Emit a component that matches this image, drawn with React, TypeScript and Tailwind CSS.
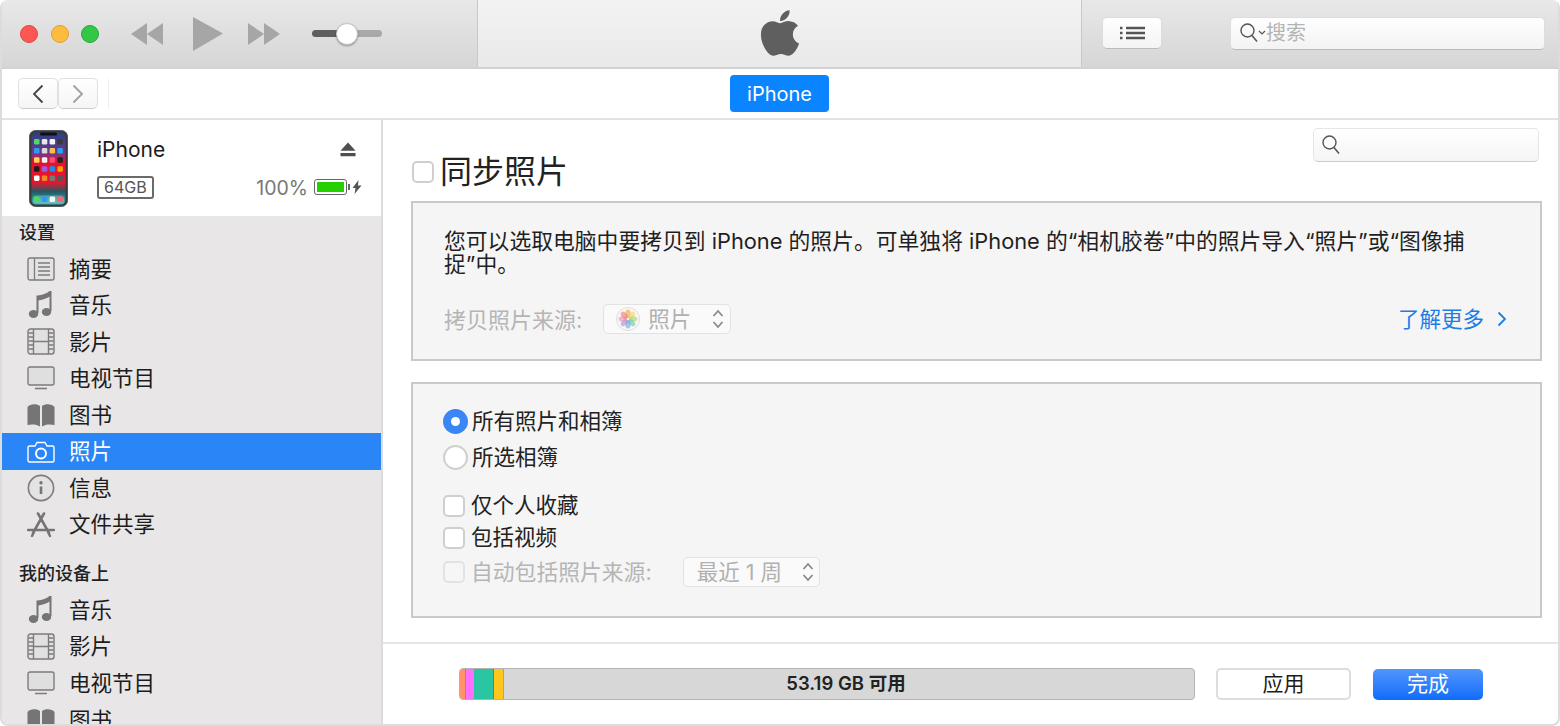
import { FaApple } from "react-icons/fa";

const FONT = "font-['Inter','Noto_Sans_CJK_SC',sans-serif]";

const PHONE_ICONS = [
  ["#4cd964", "#e8e8e8", "#f5f5f5", "#3a3a3a"],
  ["#2e9bf0", "#d9d9d9", "#f2c14e", "#2aa3ef"],
  ["#ffd65a", "#f2f2f2", "#ff4f6d", "#222222"],
  ["#1c1c1c", "#a259e6", "#1d8cf0", "#ff9f0a"],
  ["#ffffff", "#f08a24", "#777777", "#555555"],
];

function IconSummary() {
  return (
    <svg viewBox="0 0 28 24" className="w-7 h-6">
      <rect x="1" y="1" width="26" height="22" rx="2" fill="#e4e3e3" stroke="#7c7c7c" strokeWidth="1.4" />
      <path d="M7.5 1v22M11 6h12M11 10h12M11 14h12M11 18h12" stroke="#7c7c7c" strokeWidth="1.3" fill="none" />
    </svg>
  );
}

function IconMusic() {
  return (
    <svg viewBox="0 0 28 28" className="w-7 h-7">
      <path d="M10.500 22V5.500C15 5 20 3.500 23.500 0.500V20" stroke="#757575" strokeWidth="2" fill="none" />
      <path d="M10.500 5.500C15 5 20 3.500 23.500 0.500V5C20 7.500 15 9 10.500 9.500z" fill="#757575" />
      <ellipse cx="6.500" cy="23" rx="4.700" ry="4" fill="#757575" />
      <ellipse cx="19.500" cy="21" rx="4.700" ry="4" fill="#757575" />
    </svg>
  );
}

function IconFilm() {
  return (
    <svg viewBox="0 0 28 27" className="w-7 h-[27px]">
      <rect x="1" y="1" width="26" height="25" rx="2.5" fill="#e2e1e1" stroke="#7c7c7c" strokeWidth="1.4" />
      <path d="M6.5 1v25M21.5 1v25M6.5 13.5h15" stroke="#7c7c7c" strokeWidth="1.4" fill="none" />
      <path d="M1.5 5h5M1.5 9h5M1.5 13h5M1.5 17h5M1.5 21h5M21.5 5h5M21.5 9h5M21.5 13h5M21.5 17h5M21.5 21h5" stroke="#7c7c7c" strokeWidth="1.4" fill="none" />
    </svg>
  );
}

function IconTv() {
  return (
    <svg viewBox="0 0 28 24" className="w-7 h-6">
      <rect x="1" y="1" width="26" height="18" rx="2" fill="#e0dfdf" stroke="#7c7c7c" strokeWidth="1.4" />
      <path d="M8 22.5h12" stroke="#7c7c7c" strokeWidth="1.6" />
    </svg>
  );
}

function IconBook() {
  return (
    <svg viewBox="0 0 28 24" className="w-7 h-6">
      <path d="M0.5 4C3 0.5 10 0.5 13 3v20.5C10 21 4 21 0.5 22z" fill="#757575" />
      <path d="M27.5 4C25 0.5 18 0.5 15 3v20.5C18 21 24 21 27.5 22z" fill="#757575" />
    </svg>
  );
}

function IconCamera() {
  return (
    <svg viewBox="0 0 28 22" className="w-7 h-[22px]">
      <path d="M2.5 5H8l2-3.5h8L20 5h5.5A1.5 1.5 0 0 1 27 6.5v13a1.5 1.5 0 0 1-1.5 1.5h-23A1.5 1.5 0 0 1 1 19.500v-13A1.500 1.500 0 0 1 2.500 5z" fill="none" stroke="#ffffff" strokeWidth="1.4" />
      <circle cx="14" cy="12.5" r="5" fill="none" stroke="#ffffff" strokeWidth="2" />
    </svg>
  );
}

function IconInfo() {
  return (
    <svg viewBox="0 0 28 28" className="w-7 h-7">
      <circle cx="14" cy="14" r="12.6" fill="#e4e3e3" stroke="#7c7c7c" strokeWidth="1.6" />
      <circle cx="14" cy="8.800" r="1.700" fill="#757575" />
      <path d="M14 12.500v7.500" stroke="#757575" strokeWidth="2.600" />
    </svg>
  );
}

function IconApps() {
  return (
    <svg viewBox="0 0 28 26" className="w-7 h-[26px]">
      <path d="M11 1.500L22 21M17 1.500L6 21" stroke="#757575" strokeWidth="2.600" fill="none" strokeLinecap="round" />
      <path d="M1 18h26" stroke="#757575" strokeWidth="2.400" strokeLinecap="round" />
      <path d="M5 24l1.500-3M23 24l-1.500-3" stroke="#757575" strokeWidth="2.400" strokeLinecap="round" />
    </svg>
  );
}

function SearchGlass() {
  return (
    <svg viewBox="0 0 20 22" className="w-5 h-[22px]">
      <circle cx="8.500" cy="8.500" r="6.500" fill="none" stroke="#555555" strokeWidth="1.400" />
      <path d="M13 13.500l5 6" stroke="#555555" strokeWidth="1.600" />
    </svg>
  );
}

function UpDown() {
  return (
    <svg viewBox="0 0 12 20" className="w-3 h-5">
      <path d="M1.500 7L6 2l4.500 5M1.500 13L6 18l4.500-5" fill="none" stroke="#8a8a8a" strokeWidth="1.800" />
    </svg>
  );
}

function PhotosFlower() {
  const petals = ["#f4a23c", "#f7d65a", "#a9d26a", "#6cc4a8", "#6aa6e0", "#a98ad8", "#e88ab0", "#ee7a6e"];
  return (
    <svg viewBox="0 0 24 24" className="w-6 h-6">
      <circle cx="12" cy="12" r="11.500" fill="#f8f8f8" stroke="#dddddd" />
      {petals.map((c, i) => (
        <ellipse key={c} cx="12" cy="6.800" rx="2.700" ry="4.200" fill={c} opacity="0.6" transform={`rotate(${i * 45} 12 12)`} />
      ))}
    </svg>
  );
}

function Phone() {
  return (
    <svg viewBox="0 0 39 77" className="w-[39px] h-[77px]">
      <defs>
        <linearGradient id="wall" x1="0" y1="0" x2="0" y2="1">
          <stop offset="0" stopColor="#2b3f7e" />
          <stop offset="0.28" stopColor="#6a3a8e" />
          <stop offset="0.42" stopColor="#e8112d" />
          <stop offset="0.7" stopColor="#e0182f" />
          <stop offset="0.82" stopColor="#1f5a66" />
          <stop offset="1" stopColor="#37b6b0" />
        </linearGradient>
      </defs>
      <rect x="0.500" y="0.500" width="38" height="76" rx="6" fill="#3a3a3c" stroke="#55585c" />
      <rect x="2.500" y="2.500" width="34" height="72" rx="4.500" fill="url(#wall)" />
      <rect x="11" y="2.500" width="17" height="3" rx="1.500" fill="#111111" />
      {PHONE_ICONS.map((row, y) =>
        row.map((c, x) => (
          <rect key={`${x}-${y}`} x={5 + x * 7.800} y={9 + y * 9.100} width="5.500" height="5.500" rx="1.300" fill={c} />
        ))
      )}
      <rect x="4" y="65.500" width="31" height="8" rx="3" fill="#ffffff" opacity="0.25" />
      {["#4cd964", "#2e9bf0", "#f5f5f5", "#ff5e78"].map((c, x) => (
        <rect key={c} x={5 + x * 7.800} y="66.500" width="5.500" height="5.500" rx="1.300" fill={c} />
      ))}
    </svg>
  );
}

function SideRow({ icon, label, active }: { icon: React.ReactNode; label: string; active?: boolean }) {
  return (
    <div className={`h-[36.55px] flex items-center pl-[25px] ${active ? "bg-[#2a85f6] text-white" : "text-[#1c1c1c]"}`}>
      <div className="w-7 flex justify-center shrink-0">{icon}</div>
      <span className="ml-[14px] pt-[1px] text-[21.500px] leading-none">{label}</span>
    </div>
  );
}

function CheckBox({ disabled }: { disabled?: boolean }) {
  return (
    <div className={`w-[22px] h-[22px] rounded-[5px] border-2 shrink-0 ${disabled ? "bg-[#f6f6f6] border-[#e2e2e2]" : "bg-white border-[#cfcfcf]"}`} />
  );
}

export default function App() {
  return (
    <div className={`${FONT} w-[1560px] h-[726px] overflow-hidden bg-white flex flex-col border-2 border-t-0 border-[#dcdcdc] rounded-[8px]`}>
      {/* toolbar */}
      <div className="h-[69px] shrink-0 flex bg-linear-to-b from-[#e8e8e8] to-[#d6d6d6] border-b-2 border-[#d2d2d2] -mx-[2px]">
        <div className="w-[478px] shrink-0 flex items-center pl-5 border-r border-[#c8c8c8]">
          <div className="w-[18px] h-[18px] rounded-full bg-[#fc5753] border border-[#df4744]" />
          <div className="w-[18px] h-[18px] rounded-full bg-[#fdbc40] border border-[#de9f34] ml-[12.500px]" />
          <div className="w-[18px] h-[18px] rounded-full bg-[#33c748] border border-[#27aa35] ml-[12.500px]" />
          <svg viewBox="0 0 32 22" className="w-8 h-[22px] ml-8">
            <path d="M16 0v22L0 11zM32 0v22L16 11z" fill="#a6a6a6" />
          </svg>
          <svg viewBox="0 0 30 34" className="w-[30px] h-[34px] ml-[30px]">
            <path d="M0 0l30 16.500L0 34z" fill="#a6a6a6" />
          </svg>
          <svg viewBox="0 0 32 22" className="w-8 h-[22px] ml-[25px]">
            <path d="M0 0l16 11L0 22zM16 0l16 11-16 11z" fill="#a6a6a6" />
          </svg>
          <div className="ml-8 w-[70px] h-[22px] flex items-center relative">
            <div className="w-[26px] h-[7px] rounded-l-full bg-[#5f5f5f]" />
            <div className="flex-1 h-[7px] rounded-r-full bg-[#a9a9a9]" />
            <div className="absolute left-[24px] top-0 w-[22px] h-[22px] rounded-full bg-white border border-[#c6c6c6] shadow-[0_1px_2px_rgba(0,0,0,0.35)]" />
          </div>
        </div>
        <div className="w-[604px] shrink-0 flex items-center justify-center bg-linear-to-b from-[#f3f3f3] to-[#e9e9e9] border-r border-[#c8c8c8]">
          <FaApple className="w-[52px] h-[52px] text-[#5f5f5f] -mt-[1px]" />
        </div>
        <div className="flex-1 flex items-center pl-[20px] pb-[1px]">
          <div className="w-[60px] h-[32px] rounded-[5px] bg-linear-to-b from-white to-[#f4f4f4] border border-[#dcdcdc] border-b-[#bcbcbc] flex items-center justify-center">
            <svg viewBox="0 0 26 14" className="w-[26px] h-[14px]">
              <path d="M7 2h19M7 7h19M7 12h19M1 2h2.500M1 7h2.500M1 12h2.500" stroke="#555555" strokeWidth="2.400" />
            </svg>
          </div>
          <div className="ml-[68px] w-[315px] h-[33px] rounded-[5px] bg-linear-to-b from-white to-[#f3f3f3] border border-[#dddddd] border-b-[#b9b9b9] flex items-center pl-[8px]">
            <SearchGlass />
            <svg viewBox="0 0 8 6" className="w-2 h-[6px] -ml-[1px]">
              <path d="M1 1l3 3 3-3" fill="none" stroke="#555555" strokeWidth="1.200" />
            </svg>
            <span className="text-[20px] leading-none text-[#b4b4b4]">搜索</span>
          </div>
        </div>
      </div>

      {/* nav bar */}
      <div className="h-[51px] shrink-0 relative flex items-center pl-4 border-b-2 border-[#e2e2e2] -mr-[2px]">
        <div className="w-10 h-[31px] rounded-[5px] bg-linear-to-b from-white to-[#f5f5f5] border border-[#e0e0e0] border-b-[#cdcdcd] flex items-center justify-center">
          <svg viewBox="0 0 12 20" className="w-3 h-5">
            <path d="M10.500 1.500L2 10l8.500 8.500" fill="none" stroke="#444444" strokeWidth="1.800" />
          </svg>
        </div>
        <div className="w-10 h-[31px] rounded-[5px] bg-linear-to-b from-white to-[#f5f5f5] border border-[#e0e0e0] border-b-[#cdcdcd] flex items-center justify-center">
          <svg viewBox="0 0 12 20" className="w-3 h-5">
            <path d="M1.500 1.500L10 10l-8.500 8.500" fill="none" stroke="#a0a0a0" strokeWidth="1.800" />
          </svg>
        </div>
        <div className="ml-[10px] w-px h-[30px] bg-[#efefef]" />
        <div className="absolute left-[728px] top-[6px] w-[99px] h-[37px] rounded-[4px] bg-[#0a84ff] text-white text-[20px] flex items-center justify-center">
          iPhone
        </div>
      </div>

      <div className="flex-1 flex min-h-0">
        {/* sidebar */}
        <div className="w-[381px] shrink-0 bg-[#e8e6e7] border-r-2 border-[#dcdcdc] overflow-hidden">
          <div className="h-[96px] bg-white flex items-start pl-[27px] pr-[20px] pt-[10px]">
            <Phone />
            <div className="flex-1 ml-[29px] text-[#1c1c1c]">
              <div className="flex items-center justify-between h-[38px]">
                <span className="text-[21px] leading-none">iPhone</span>
                <svg viewBox="0 0 18 16" className="w-4 h-[15px] mr-[5px]">
                  <path d="M9 0l8.500 9.500H0.500zM0.500 12h17v3.500H0.500z" fill="#4f4f4f" />
                </svg>
              </div>
              <div className="flex items-center justify-between mt-[6px] h-[26px]">
                <span className="h-[23px] px-[5px] border-2 border-[#6a6a6a] rounded-[3px] text-[16px] leading-[19px] text-[#555555]">64GB</span>
                <div className="flex items-center -mr-[1px]">
                  <span className="pt-[3px] text-[19.500px] leading-none text-[#777777]">100%</span>
                  <div className="ml-[6px] w-[33px] h-[16px] border border-[#666666] rounded-[3px] p-[2px]">
                    <div className="w-full h-full bg-[#26d000]" />
                  </div>
                  <div className="w-[2px] h-[6px] bg-[#666666] ml-[1px]" />
                  <svg viewBox="0 0 10 14" className="w-[10px] h-[14px] ml-[2px]">
                    <path d="M6.500 0L0.500 8h3L2.500 14l7-8.500H6z" fill="#555555" />
                  </svg>
                </div>
              </div>
            </div>
          </div>

          <div className="h-[34.500px] flex items-end pl-[17px] pb-[8px] text-[18px] leading-5 font-medium text-[#222222]">设置</div>
          <SideRow icon={<IconSummary />} label="摘要" />
          <SideRow icon={<IconMusic />} label="音乐" />
          <SideRow icon={<IconFilm />} label="影片" />
          <SideRow icon={<IconTv />} label="电视节目" />
          <SideRow icon={<IconBook />} label="图书" />
          <SideRow icon={<IconCamera />} label="照片" active />
          <SideRow icon={<IconInfo />} label="信息" />
          <SideRow icon={<IconApps />} label="文件共享" />
          <div className="h-[49px] flex items-end pl-[17px] pb-[8px] text-[18px] leading-5 font-medium text-[#222222]">我的设备上</div>
          <SideRow icon={<IconMusic />} label="音乐" />
          <SideRow icon={<IconFilm />} label="影片" />
          <SideRow icon={<IconTv />} label="电视节目" />
          <SideRow icon={<IconBook />} label="图书" />
        </div>

        {/* main */}
        <div className="flex-1 min-w-0 flex flex-col">
          <div className="flex-1 pl-[28px] pr-[16px] border-b-2 border-[#e6e6e6]">
            <div className="h-[81px] flex items-start justify-between">
              <div className="flex items-center mt-[34px] ml-[1px]">
                <CheckBox />
                <span className="ml-[6px] pt-[1px] text-[32px] leading-[34px] text-[#222222]">同步照片</span>
              </div>
              <div className="mt-2 mr-[3px] w-[226px] h-[34px] rounded-[5px] bg-linear-to-b from-white to-[#f5f5f5] border border-[#e6e6e6] border-b-[#cccccc] flex items-center pl-[7px]">
                <SearchGlass />
              </div>
            </div>

            <div className="h-[160px] bg-[#f5f5f5] border-2 border-[#c9c9c9] pl-[31px] pr-[33px] pt-[27px]">
              <p className="text-[21.800px] leading-[23px] text-[#1f1f1f] pr-[20px]">
                您可以选取电脑中要拷贝到 iPhone 的照片。可单独将 iPhone 的“相机胶卷”中的照片导入“照片”或“图像捕捉”中。
              </p>
              <div className="flex items-center mt-[28px]">
                <span className="pt-[2px] text-[22px] leading-none text-[#b5b5b5]">拷贝照片来源:</span>
                <div className="ml-[21px] w-[128px] h-[30px] rounded-[5px] bg-[#fafafa] border border-[#e2e2e2] flex items-center pl-[12px] pr-[6px]">
                  <PhotosFlower />
                  <span className="ml-[8px] pt-[2px] text-[21.500px] leading-none text-[#b0b0b0]">照片</span>
                  <div className="ml-auto"><UpDown /></div>
                </div>
                <span className="ml-auto pt-[2px] text-[21.500px] leading-none text-[#1a7de8]">了解更多</span>
                <svg viewBox="0 0 10 16" className="w-[10px] h-4 ml-[13px]">
                  <path d="M1.500 1.500L8 8l-6.500 6.500" fill="none" stroke="#1a7de8" strokeWidth="1.800" />
                </svg>
              </div>
            </div>

            <div className="mt-[21px] h-[236px] bg-[#f5f5f5] border-2 border-[#c9c9c9] pl-[30px] pt-[22px]">
              <div className="flex items-center h-[30px]">
                <div className="w-[25px] h-[25px] rounded-full bg-[#3a86f5] flex items-center justify-center">
                  <div className="w-[9px] h-[9px] rounded-full bg-white" />
                </div>
                <span className="ml-[4px] pt-[1px] text-[21.500px] leading-none text-[#222222]">所有照片和相簿</span>
              </div>
              <div className="flex items-center h-[30px] mt-[6px]">
                <div className="w-[25px] h-[25px] rounded-full bg-white border-2 border-[#cfcfcf]" />
                <span className="ml-[4px] pt-[1px] text-[21.500px] leading-none text-[#222222]">所选相簿</span>
              </div>
              <div className="flex items-center h-[30px] mt-[19px]">
                <CheckBox />
                <span className="ml-[6px] text-[21.500px] leading-none text-[#222222]">仅个人收藏</span>
              </div>
              <div className="flex items-center h-[30px] mt-[2px]">
                <CheckBox />
                <span className="ml-[6px] text-[21.500px] leading-none text-[#222222]">包括视频</span>
              </div>
              <div className="flex items-center h-[32px] mt-[3px]">
                <CheckBox disabled />
                <span className="ml-[6px] pt-[2px] text-[21.800px] leading-none text-[#b5b5b5]">自动包括照片来源:</span>
                <div className="ml-[31px] w-[137px] h-[30px] rounded-[5px] bg-[#fafafa] border border-[#e2e2e2] flex items-center pl-[13px] pr-[5px]">
                  <span className="pt-[2px] text-[21.500px] leading-none text-[#b0b0b0]">最近 1 周</span>
                  <div className="ml-auto"><UpDown /></div>
                </div>
              </div>
            </div>
          </div>

          {/* footer */}
          <div className="h-[80px] shrink-0 flex items-center pl-[76px]">
            <div className="w-[736px] h-[32px] rounded-[4px] bg-[#d7d7d7] border border-[#b3b3b3] overflow-hidden flex relative">
              <div className="w-[6px] bg-[#ff9367] border-r border-[#cf7a5a]" />
              <div className="w-2 bg-[#ff6fff]" />
              <div className="w-5 bg-[#2ac6a1] border-r border-[#1f9f82]" />
              <div className="w-[10px] bg-[#ffc61e] border-r border-[#dca412]" />
              <span className="absolute inset-0 pl-[38px] flex items-center justify-center text-[18.500px] font-semibold text-[#222222]">53.19 GB 可用</span>
            </div>
            <div className="ml-[21px] w-[135px] h-[32px] rounded-[5px] bg-white border-2 border-[#dddddd] flex items-center justify-center text-[21px] text-[#1c1c1c]">应用</div>
            <div className="ml-[22px] w-[110px] h-[31px] rounded-[5px] bg-linear-to-b from-[#4f95fb] to-[#0a6cfb] flex items-center justify-center text-[21px] text-white">完成</div>
          </div>
        </div>
      </div>
    </div>
  );
}
